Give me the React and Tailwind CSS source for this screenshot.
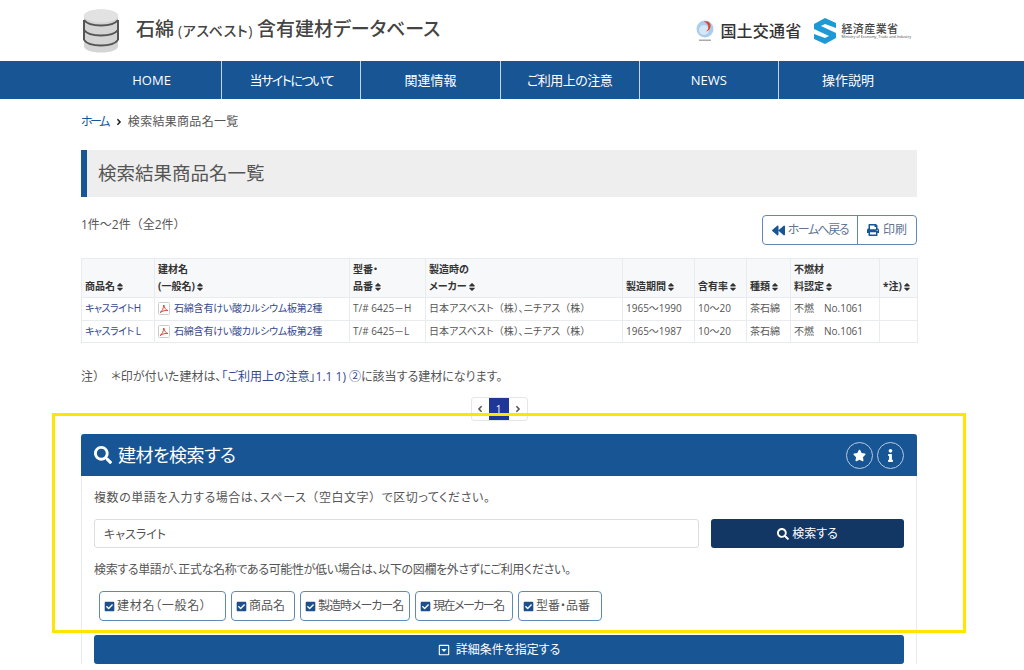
import React from "react";
import {
  FaSearch,
  FaStar,
  FaInfo,
  FaPrint,
  FaBackward,
  FaSort,
  FaAngleLeft,
  FaAngleRight,
  FaRegCaretSquareDown,
  FaCheckSquare,
} from "react-icons/fa";

const font = "font-['Open_Sans','Noto_Sans_CJK_JP',sans-serif] [font-feature-settings:'palt']";

const navItems = [
  { label: "HOME", cls: "" },
  { label: "当サイトについて", cls: "tracking-[-1.5px]" },
  { label: "関連情報", cls: "" },
  { label: "ご利用上の注意", cls: "tracking-[-0.5px]" },
  { label: "NEWS", cls: "" },
  { label: "操作説明", cls: "" },
];

const rows = [
  { name: "キャスライトH", model: "T/# 6425－H", period: "1965～1990" },
  { name: "キャスライト L", model: "T/# 6425－L", period: "1965～1987" },
];

const checks = [
  { label: "建材名（一般名）", cls: "w-[127px] tracking-[0.7px]" },
  { label: "商品名", cls: "w-[64px]" },
  { label: "製造時メーカー名", cls: "w-[110px] tracking-[-1px]" },
  { label: "現在メーカー名", cls: "w-[98px] tracking-[-1.5px]" },
  { label: "型番・品番", cls: "w-[84px]" },
];

const DbLogo = () => (
  <svg width="36" height="44" viewBox="0 0 36 44">
    <path d="M1 7c0-4 7-6.500 17-6.500S35 3 35 7v30c0 4-7 6.500-17 6.500S1 41 1 37z" fill="#d4d4d4" />
    <ellipse cx="18" cy="7" rx="17" ry="6.500" fill="#e2e2e2" />
    <path d="M1 11c3 4 9 5.500 17 5.500S32 15 35 11M1 21c3 4 9 5.500 17 5.500S32 25 35 21M1 31c3 4 9 5.500 17 5.500S32 35 35 31M1 11v20M35 11v20" fill="none" stroke="#555" strokeWidth="2" />
  </svg>
);

const MlitLogo = () => (
  <svg width="20" height="22" viewBox="0 0 20 22">
    <circle cx="10" cy="9" r="8.500" fill="#a9cdec" />
    <circle cx="9" cy="10" r="5" fill="#d6e8f6" />
    <path d="M9 1.500c5-1 8 3 6 7-1 2-3 3-4 3 3-2 4-7-2-10z" fill="#e2452f" />
    <rect x="4" y="19.500" width="12" height="1.500" fill="#aaa" />
  </svg>
);

const MetiLogo = () => (
  <svg width="24" height="26" viewBox="0 0 24 26">
    <path d="M12 0l11 5v5l-11-4-4 2 15 7v5l-11 6-11-5v-5l11 4 4-2L1 11V6z" fill="#1d9ad6" />
  </svg>
);

const PdfIcon = () => (
  <svg width="12" height="13" viewBox="0 0 12 13" className="shrink-0">
    <rect x="0.500" y="0.500" width="11" height="12" rx="1" fill="#fff" stroke="#ccc" />
    <path d="M2 10.500c2-1 3.500-4 3.800-7.500.6 3 2 5 4.200 5.500-2.500-.3-5 .3-8 2z" fill="none" stroke="#d9483b" strokeWidth="1" />
  </svg>
);

const Sort = () => <FaSort className="inline text-[10px] text-[#333]" />;

// full-width brackets keep their width, the kana around them stay narrow
const Wide = ({ children }) => <span className="[font-feature-settings:normal]">{children}</span>;

const th = "border border-[#e9ecef] bg-[#f7f8f9] px-[3px] pb-[2px] align-bottom text-left text-[10px] leading-[17px] font-bold text-[#333]";
const td = "border border-[#e9ecef] px-[3px] text-[10px] whitespace-nowrap text-[#555]";

export default function App() {
  return (
    <div className={`relative h-[670px] overflow-hidden bg-white ${font}`}>
      {/* header */}
      <header className="ml-[81px] flex h-[61px] w-[836px] items-center justify-between">
        <div className="flex items-center gap-[17px] pl-[2px]">
          <DbLogo />
          <h1 className="flex items-baseline pb-[2px] text-[19px] leading-none font-medium text-[#444]">
            石綿<span className="mx-[4px] text-[14px] tracking-[0.6px]">(アスベスト)</span>含有建材データベース
          </h1>
        </div>
        <div className="flex items-center pr-[6px]">
          <MlitLogo />
          <span className="ml-[5px] text-[16px] tracking-[0.2px] font-medium text-[#333]">国土交通省</span>
          <span className="ml-[12px]"><MetiLogo /></span>
          <div className="ml-[4px] flex flex-col leading-none text-[#444]">
            <span className="text-[11px] tracking-[0.4px] font-medium">経済産業省</span>
            <span className="mt-[1px] text-[3.700px] whitespace-nowrap">Ministry of Economy, Trade and Industry</span>
          </div>
        </div>
      </header>

      {/* nav */}
      <nav className="h-[38px] bg-[#175595]">
        <ul className="ml-[82px] grid h-full w-[835px] grid-cols-6">
          {navItems.map((item, i) => (
            <li
              key={item.label}
              className={`flex items-center justify-center pt-[2px] text-[13px] text-white ${item.cls} ${i > 0 ? "border-l border-[#c6d5e6]" : ""}`}
            >
              {item.label}
            </li>
          ))}
        </ul>
      </nav>

      <main className="ml-[81px] w-[836px]">
        {/* breadcrumb */}
        <div className="flex h-[44px] items-center pt-[1px] text-[12px] text-[#555]">
          <span className="tracking-[-2.500px] text-[#175595]">ホーム</span>
          <FaAngleRight className="mr-[4px] ml-[6px] text-[10px] text-[#222]" />
          <span className="tracking-[0.3px]">検索結果商品名一覧</span>
        </div>

        <h2 className="mt-[7px] flex h-[47px] items-center border-l-[6px] border-[#175595] bg-[#eeeeee] pb-[2px] pl-[11px] text-[18.500px] font-normal text-[#555]">
          検索結果商品名一覧
        </h2>

        <div className="mt-[18px] flex items-start justify-between">
          <p className="pt-[1px] text-[12px] leading-[17px] text-[#555] [font-feature-settings:normal]">1件～2件（全2件）</p>
          <div className="flex h-[30px] overflow-hidden rounded-[4px] border border-[#5f8ab8] text-[12px] text-[#5f7590]">
            <span className="flex items-center gap-[3px] border-r border-[#5f8ab8] pr-[9px] pl-[9px]">
              <FaBackward className="text-[13px] text-[#175595]" />
              <span className="tracking-[-1.5px]">ホームへ戻る</span>
            </span>
            <span className="flex items-center gap-[4px] px-[9px]">
              <FaPrint className="text-[12px] text-[#175595]" />
              印刷
            </span>
          </div>
        </div>

        {/* result table */}
        <table className="mt-[13px] w-[836px] table-fixed border-collapse">
          <thead>
            <tr className="h-[39px]">
              <th className={`${th} w-[73px]`}>商品名<Sort /></th>
              <th className={`${th} w-[195px]`}>建材名<br />(一般名)<Sort /></th>
              <th className={`${th} w-[76px]`}>型番・<br />品番<Sort /></th>
              <th className={`${th} w-[197px]`}>製造時の<br />メーカー<Sort /></th>
              <th className={`${th} w-[72px]`}>製造期間<Sort /></th>
              <th className={`${th} w-[52px]`}>含有率<Sort /></th>
              <th className={`${th} w-[44px]`}>種類<Sort /></th>
              <th className={`${th} w-[89px]`}>不燃材<br />料認定<Sort /></th>
              <th className={`${th} w-[38px]`}>*注)<Sort /></th>
            </tr>
          </thead>
          <tbody>
            {rows.map((row) => (
              <tr key={row.name} className="h-[22.500px]">
                <td className={td}><span className="tracking-[-0.5px] text-[#34498f]">{row.name}</span></td>
                <td className={td}>
                  <span className="flex items-center gap-[4px] tracking-[-0.2px] text-[#34498f]">
                    <PdfIcon />
                    石綿含有けい酸カルシウム板第2種
                  </span>
                </td>
                <td className={td}>{row.model}</td>
                <td className={td}>日本アスベスト<Wide>（株）</Wide>、ニチアス<Wide>（株）</Wide></td>
                <td className={td}>{row.period}</td>
                <td className={td}>10～20</td>
                <td className={td}>茶石綿</td>
                <td className={td}>不燃　No.1061</td>
                <td className={td}></td>
              </tr>
            ))}
          </tbody>
        </table>

        <p className="mt-[25px] text-[12px] leading-[17px] whitespace-nowrap text-[#555]">
          <Wide>注）</Wide>　＊印が付いた建材は、<span className="text-[#34498f]">「ご利用上の注意」1.1 1) ②</span>に該当する建材になります。
        </p>

        {/* pagination */}
        <div className="mt-[12px] flex justify-center">
          <div className="flex h-[24px] w-[57px] items-stretch rounded-[3px] border border-[#e6e6e6] text-[#555]">
            <span className="flex w-[17px] items-center justify-center text-[10px]"><FaAngleLeft /></span>
            <span className="flex w-[20px] items-center justify-center bg-[#1f3796] text-[10px] text-white">1</span>
            <span className="flex w-[18px] items-center justify-center text-[10px]"><FaAngleRight /></span>
          </div>
        </div>

        {/* search panel */}
        <section className="mt-[13px] rounded-t-[3px] border-x border-[#e9ecef]">
          <div className="-mx-px flex h-[42px] items-center justify-between rounded-t-[3px] bg-[#175595] pr-[13px] pl-[13px] text-white">
            <div className="flex items-center gap-[6px] text-[18px]">
              <FaSearch className="text-[18px]" />
              <span className="tracking-[-0.5px]">建材を検索する</span>
            </div>
            <div className="flex gap-[4px]">
              <span className="flex h-[27px] w-[27px] items-center justify-center rounded-full border border-[#b9cbe0]">
                <FaStar className="text-[13px]" />
              </span>
              <span className="flex h-[27px] w-[27px] items-center justify-center rounded-full border border-[#b9cbe0]">
                <FaInfo className="text-[13px]" />
              </span>
            </div>
          </div>
          <div className="px-[12px]">
            <p className="pt-[13px] text-[12px] leading-[17px] tracking-[0.55px] text-[#555]">
              複数の単語を入力する場合は、スペース<Wide>（空白文字）</Wide>で区切ってください。
            </p>
            <div className="mt-[13px] flex gap-[12px]">
              <input
                readOnly
                value="キャスライト"
                className="h-[29px] w-[605px] rounded-[3px] border border-[#dddddd] px-[9px] text-[12px] text-[#555] outline-none"
              />
              <button className="flex h-[29px] w-[193px] items-center justify-center gap-[3px] rounded-[3px] bg-[#123764] text-[12px] text-white">
                <FaSearch className="text-[12px]" />
                検索する
              </button>
            </div>
            <p className="mt-[13px] text-[12px] leading-[17px] tracking-[-0.35px] text-[#555]">
              検索する単語が、正式な名称である可能性が低い場合は、以下の図欄を外さずにご利用ください。
            </p>
            <div className="mt-[13px] flex gap-[5px] pl-[5px]">
              {checks.map((c) => (
                <label
                  key={c.label}
                  className={`flex h-[30px] items-center gap-[2px] rounded-[4px] border border-[#5f8ab8] pl-[4px] text-[12px] whitespace-nowrap text-[#555] ${c.cls}`}
                >
                  <FaCheckSquare className="shrink-0 text-[11px] text-[#1d4f8c]" />
                  {c.label}
                </label>
              ))}
            </div>
            <button className="mt-[14px] flex h-[29px] w-full items-center justify-center gap-[6px] rounded-[3px] bg-[#175595] text-[12px] text-white">
              <FaRegCaretSquareDown className="text-[12px]" />
              詳細条件を指定する
            </button>
          </div>
        </section>
      </main>

      {/* highlight frame */}
      <div className="pointer-events-none absolute top-[413px] left-[52px] h-[220px] w-[914px] border-[3px] border-[#ffe600]"></div>
    </div>
  );
}
